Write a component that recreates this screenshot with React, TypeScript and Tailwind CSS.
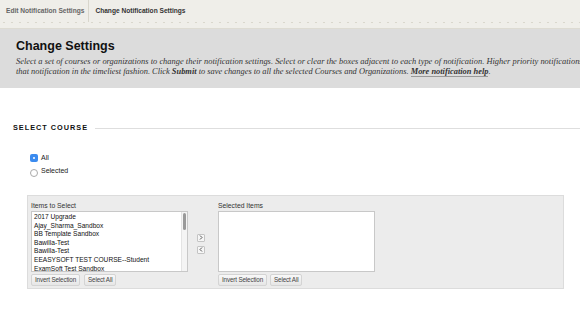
import React from 'react'

const courses = [
  '2017 Upgrade',
  'Ajay_Sharma_Sandbox',
  'BB Template Sandbox',
  'Bawilla-Test',
  'Bawilla-Test',
  'EEASYSOFT TEST COURSE--Student',
  'ExamSoft Test Sandbox',
]

function SmallButton({ label }: { label: string }) {
  return (
    <button className="h-[12px] px-[3px] border border-[#d4d4d4] rounded-[2px] bg-gradient-to-b from-[#f8f8f8] to-[#e6e6e6] text-[6.3px] tracking-[-0.15px] leading-none text-[#444]">
      {label}
    </button>
  )
}

function ArrowButton({ dir }: { dir: 'right' | 'left' }) {
  return (
    <span className="w-[8px] h-[8px] border border-[#c4c4c4] rounded-[1px] bg-[#f6f6f6] flex items-center justify-center">
      <svg width="4" height="5" viewBox="0 0 4 5">
        <path
          d={dir === 'right' ? 'M1 0.5 L3 2.5 L1 4.5' : 'M3 0.5 L1 2.5 L3 4.5'}
          fill="none"
          stroke="#555"
          strokeWidth="1"
        />
      </svg>
    </span>
  )
}

function ListBox({ items, scroll }: { items: string[]; scroll?: boolean }) {
  return (
    <div className="relative w-[157px] h-[61px] bg-white border border-[#c8c8c8] overflow-hidden pl-[2px] pt-[1px]">
      {items.map((item, i) => (
        <div key={i} className="text-[6.6px] leading-[8.6px] text-[#111] whitespace-nowrap">
          {item}
        </div>
      ))}
      {scroll && (
        <div className="absolute right-0 top-0 bottom-0 w-[6px] bg-[#f4f4f4] border-l border-[#e4e4e4]">
          <div className="mx-auto mt-[1px] w-[3px] h-[17px] rounded-full bg-[#9a9a9a]" />
        </div>
      )}
    </div>
  )
}

export default function App() {
  return (
    <div className="w-[580px] h-[311px] overflow-hidden bg-white font-['Liberation_Sans',Arial,sans-serif]">
      {/* breadcrumbs */}
      <div className="h-[29px] bg-[#efeee9] border-b border-[#dddbd2]">
        <div className="flex h-[22px] items-center text-[6.6px] font-bold">
          <span className="pl-[6px] pr-[4px] text-[#666] h-full flex items-center border-r border-[#d8d6cc]">Edit Notification Settings</span>
          <span className="px-[6px] text-[#333]">Change Notification Settings</span>
        </div>
        <div className="h-[3px] bg-[radial-gradient(circle_at_50%_0,#d9d7cd_1px,transparent_1.6px)] bg-[length:8px_3px]" />
      </div>

      {/* page header */}
      <div className="h-[59px] bg-[#dcdcdc] pl-[16px] pt-[10px] overflow-hidden">
        <h1 className="text-[12.5px] leading-[14px] font-bold text-[#111]">Change Settings</h1>
        <div className="mt-[4px] text-[8.4px] leading-[10px] italic text-[#333] font-['Liberation_Serif',Georgia,serif] whitespace-nowrap">
          <div className="tracking-[0.03px]">
            Select a set of courses or organizations to change their notification settings. Select or clear the boxes adjacent to each type of notification. Higher priority notifications should
          </div>
          <div>
            that notification in the timeliest fashion. Click <b>Submit</b> to save changes to all the selected Courses and Organizations.{' '}
            <b className="border-b border-[#999]">More notification help</b>.
          </div>
        </div>
      </div>

      {/* section heading */}
      <div className="flex items-center mt-[35px] pl-[13px]">
        <span className="text-[7.3px] font-bold tracking-[1px] text-[#111]">SELECT COURSE</span>
        <div className="flex-1 ml-[7px] h-px bg-[#dedede]" />
      </div>

      {/* radios */}
      <div className="mt-[20px] pl-[30px] flex flex-col gap-[3px] text-[7px] text-[#222]">
        <label className="flex items-center gap-[3px] h-[9px]">
          <span className="w-[8px] h-[8px] rounded-[2px] bg-[#3b8bef] flex items-center justify-center">
            <span className="w-[2px] h-[2px] bg-white rounded-full" />
          </span>
          All
        </label>
        <label className="flex items-center gap-[3px] h-[9px] mt-[1px]">
          <span className="w-[8px] h-[8px] rounded-full border border-[#aaa] bg-white mt-[3px]" />
          Selected
        </label>
      </div>

      {/* picker panel */}
      <div className="ml-[27px] mt-[19px] w-[537px] h-[94px] bg-[#ececec] border border-[#dcdcdc] flex pl-[3px] pt-[5px]">
        <div>
          <div className="text-[6.8px] text-[#333] h-[10px] leading-[10px]">Items to Select</div>
          <ListBox items={courses} scroll />
          <div className="flex gap-[4px] mt-[2px]">
            <SmallButton label="Invert Selection" />
            <SmallButton label="Select All" />
          </div>
        </div>
        <div className="flex flex-col gap-[4px] pt-[33px] ml-[9px] mr-[13px]">
          <ArrowButton dir="right" />
          <ArrowButton dir="left" />
        </div>
        <div>
          <div className="text-[6.8px] text-[#333] h-[10px] leading-[10px]">Selected Items</div>
          <ListBox items={[]} />
          <div className="flex gap-[3px] mt-[2px]">
            <SmallButton label="Invert Selection" />
            <SmallButton label="Select All" />
          </div>
        </div>
      </div>
    </div>
  )
}
